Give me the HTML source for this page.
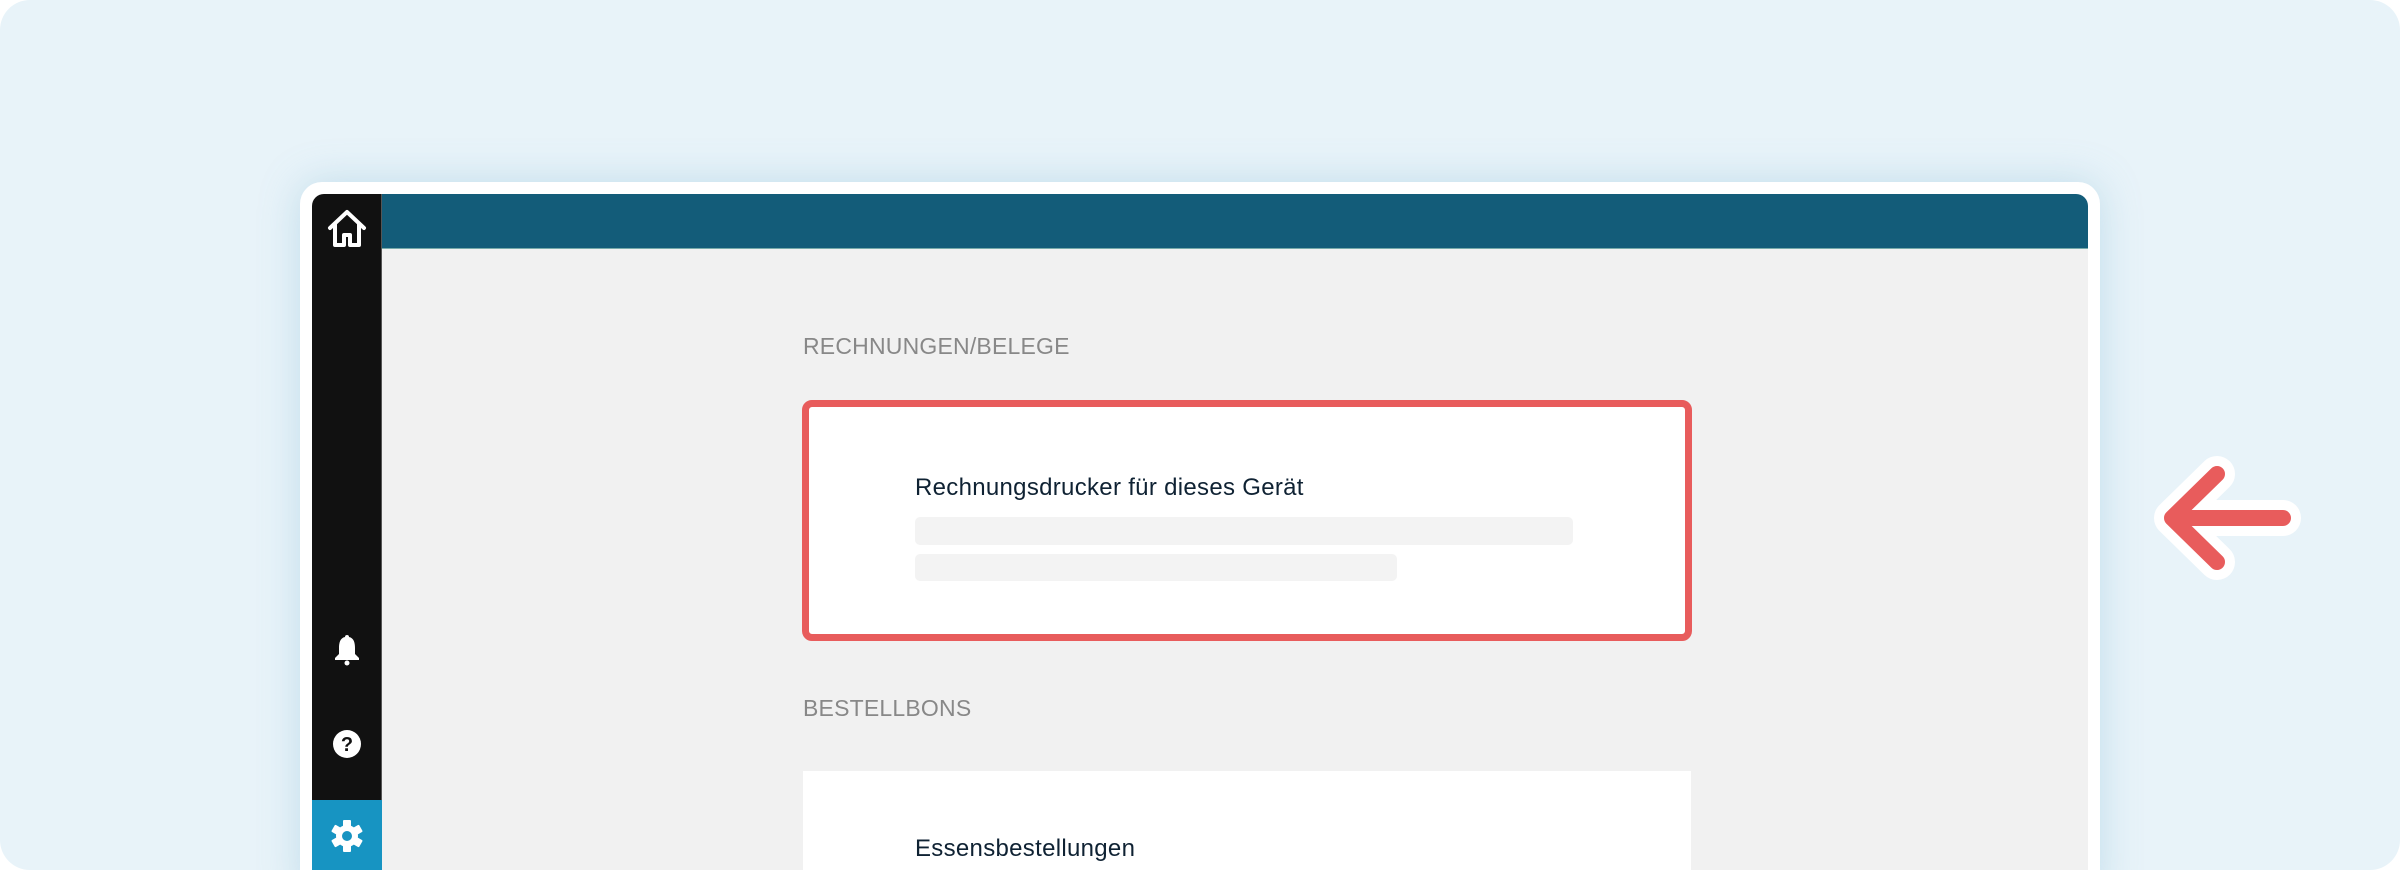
<!DOCTYPE html>
<html><head><meta charset="utf-8"><style>
*{margin:0;padding:0;box-sizing:border-box}
html,body{width:2400px;height:870px;overflow:hidden;background:#fff}
.wrap{position:absolute;left:0;top:0;width:2400px;height:870px;overflow:hidden;background:#e8f3f9;border-radius:30px}
.frame{position:absolute;left:300px;top:182px;width:1800px;height:720px;background:#fff;border-radius:22px;box-shadow:0 0 40px rgba(120,180,210,0.35)}
.app{position:absolute;left:312px;top:194px;width:1776px;height:700px;background:#f1f1f1;border-radius:12px 12px 0 0;overflow:hidden}
.side{position:absolute;left:0;top:0;width:70px;height:700px;background:#111;border-right:1px solid #555}
.hdr{position:absolute;left:70px;top:0;right:0;height:55px;background:#135c79;border-bottom:1px solid #7aa}
.gear{position:absolute;left:0;top:606px;width:70px;height:100px;background:#1794c2}
.lbl{position:absolute;font-family:"Liberation Sans",sans-serif;font-size:23px;color:#888;letter-spacing:0.2px}
.card{position:absolute;background:#fff}
.t{position:absolute;font-family:"Liberation Sans",sans-serif;font-size:24px;color:#0f2233;letter-spacing:0.3px}
.bar{position:absolute;background:#f3f3f3;border-radius:5px}
</style></head><body>
<div class="wrap">
<div class="frame"></div>
<div class="app">
 <div class="side">
  <svg style="position:absolute;left:14px;top:14px" width="42" height="42" viewBox="0 0 42 42"><path d="M4 20 L21 4 L38 20 M9 16 V37 H18 V27 H24 V37 H33 V16" fill="none" stroke="#fff" stroke-width="4" stroke-linejoin="round" stroke-linecap="round"/></svg>
  <svg style="position:absolute;left:21px;top:440px" width="28" height="32" viewBox="0 0 28 32"><path d="M14 1 C15.5 1 16 2 16 3 C21 4 22 9 22 14 V20 L26 24 V26 H2 V24 L6 20 V14 C6 9 7 4 12 3 C12 2 12.5 1 14 1Z" fill="#fff"/><circle cx="14" cy="29" r="2.5" fill="#fff"/></svg>
  <svg style="position:absolute;left:20px;top:535px" width="30" height="30" viewBox="0 0 30 30"><circle cx="15" cy="15" r="14" fill="#fff"/><text x="15" y="22" text-anchor="middle" font-family="Liberation Sans" font-weight="bold" font-size="20" fill="#111">?</text></svg>
  <div class="gear"><svg style="position:absolute;left:18px;top:19px" width="34" height="34" viewBox="0 0 34 34"><g fill="#fff" transform="translate(17 17)"><circle r="11"/><rect x="-4" y="-16" width="8" height="32" rx="1"/><rect x="-4" y="-16" width="8" height="32" rx="1" transform="rotate(60)"/><rect x="-4" y="-16" width="8" height="32" rx="1" transform="rotate(120)"/></g><circle cx="17" cy="17" r="5" fill="#1794c2"/></svg></div>
 </div>
 <div class="hdr"></div>
</div>
<div class="lbl" style="left:803px;top:333px">RECHNUNGEN/BELEGE</div>
<div class="card" style="left:802px;top:400px;width:890px;height:241px;border:7px solid #e85c5c;border-radius:10px"></div>
<div class="t" style="left:915px;top:474px">Rechnungsdrucker für dieses Gerät</div>
<div class="bar" style="left:915px;top:517px;width:658px;height:28px"></div>
<div class="bar" style="left:915px;top:554px;width:482px;height:27px"></div>
<div class="lbl" style="left:803px;top:695px">BESTELLBONS</div>
<div class="card" style="left:803px;top:771px;width:888px;height:110px"></div>
<div class="t" style="left:915px;top:835px">Essensbestellungen</div>
<svg style="position:absolute;left:2150px;top:455px" width="160" height="130" viewBox="2150 455 160 130">
 <g fill="none" stroke-linecap="round" stroke-linejoin="round">
  <path d="M2283 518 H2172 M2217 474 L2172 518 L2217 562" stroke="#fff" stroke-width="36"/>
  <path d="M2283 518 H2172 M2217 474 L2172 518 L2217 562" stroke="#e85c5c" stroke-width="16"/>
 </g>
</svg>
</div>
</body></html>
